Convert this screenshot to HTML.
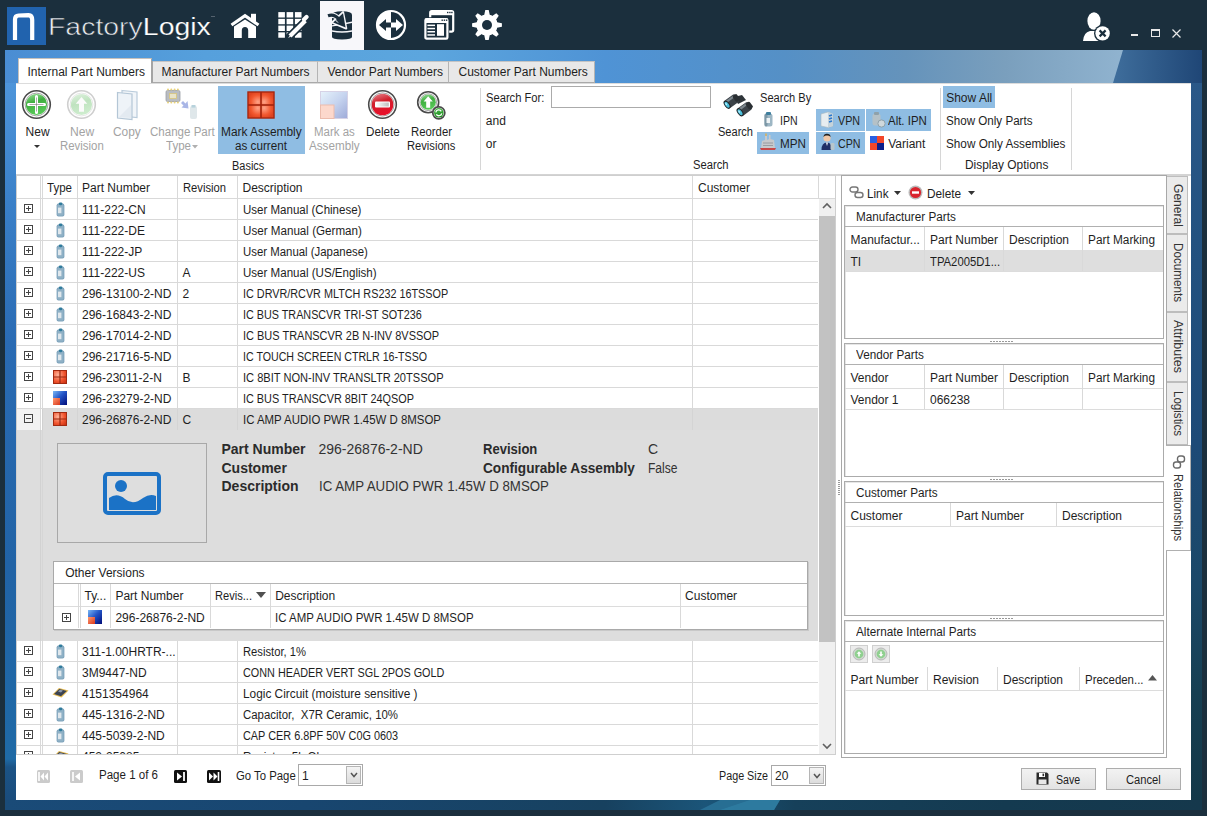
<!DOCTYPE html><html><head><meta charset="utf-8"><style>
html,body{margin:0;padding:0;}
body{width:1207px;height:816px;overflow:hidden;position:relative;background:#1b2f3d;font-family:"Liberation Sans",sans-serif;}
body div,body svg{position:absolute;box-sizing:border-box;}
</style></head><body>

<div style="left:7px;top:7px;width:39px;height:38px;background:#2163ae;"></div>
<svg style="left:7px;top:7px" width="39" height="38" viewBox="0 0 39 38"><path d="M8 33 V12.5 Q8 8.6 11.6 8.5 L21.5 8.1 Q25.2 8.3 25.2 12.8 V33" fill="none" stroke="#fff" stroke-width="4.2"/></svg>
<div style="left:48px;top:12px;font-size:23.5px;line-height:30px;white-space:nowrap;transform:scaleX(1.21);transform-origin:0 0;"><span style="color:#e9ecef;-webkit-text-stroke:0.55px #1b2f3d">Factory</span><span style="color:#ffffff;-webkit-text-stroke:0.2px #1b2f3d">Logix</span></div>
<div style="left:211px;top:16px;width:4px;height:1px;background:#55626e"></div>
<div style="left:320px;top:1px;width:44px;height:49px;background:#f7f7fa;"></div>
<svg style="left:228px;top:11px" width="34" height="30" viewBox="0 0 34 30"><rect x="23" y="2.8" width="5" height="8" fill="#fff"/><path d="M3.5 14 L17 4.8 L30.5 14" fill="none" stroke="#fff" stroke-width="3.2" stroke-linejoin="miter"/><path d="M6 15.5 L17 8.6 L28 15.5 V27 H20.2 V19.5 Q20.2 16 17 16 Q13.8 16 13.8 19.5 V27 H6 Z" fill="#fff"/></svg>
<svg style="left:277px;top:11px" width="32" height="28" viewBox="0 0 32 28"><rect x="1.3" y="1.10" width="6.6" height="5.4" fill="#fff"/><rect x="9.6" y="1.10" width="6.6" height="5.4" fill="#fff"/><rect x="17.9" y="1.10" width="6.6" height="5.4" fill="#fff"/><rect x="1.3" y="7.85" width="6.6" height="5.4" fill="#fff"/><rect x="9.6" y="7.85" width="6.6" height="5.4" fill="#fff"/><rect x="17.9" y="7.85" width="6.6" height="5.4" fill="#fff"/><rect x="1.3" y="14.60" width="6.6" height="5.4" fill="#fff"/><rect x="9.6" y="14.60" width="6.6" height="5.4" fill="#fff"/><rect x="17.9" y="14.60" width="6.6" height="5.4" fill="#fff"/><rect x="1.3" y="21.35" width="6.6" height="5.4" fill="#fff"/><rect x="9.6" y="21.35" width="6.6" height="5.4" fill="#fff"/><rect x="17.9" y="21.35" width="6.6" height="5.4" fill="#fff"/><path d="M12.5 25.5 L28 10" stroke="#1b2f3d" stroke-width="7.5" stroke-linecap="round"/><path d="M13 25 L28.3 9.7" stroke="#fff" stroke-width="4.2" stroke-linecap="butt"/><path d="M27 8.4 L29.5 6" stroke="#fff" stroke-width="4.2" stroke-linecap="round"/><path d="M11 27 L13 24.5 L14 25.5 Z" fill="#fff"/></svg>
<svg style="left:326px;top:9px" width="30" height="33" viewBox="0 0 30 33"><path d="M6 5.8 Q6 2.2 16 2.2 Q26 2.2 26 5.8 V12.6 Q16 14.6 6 16.2 Z" fill="#1b2f3d"/><path d="M6 17.6 Q16 16 26 14 V21.2 Q16 23.2 6 21.2 Z" fill="#1b2f3d"/><path d="M6 22.8 Q16 24.8 26 22.8 V28 Q26 30.4 16 30.4 Q6 30.4 6 28 Z" fill="#1b2f3d"/><path d="M2 6.8 Q8.5 4.6 13 10.6" fill="none" stroke="#f7f7fa" stroke-width="5.2"/><path d="M17 3.2 L20.2 19.4 L6 13.6 Z" fill="#f7f7fa" stroke="#f7f7fa" stroke-width="2.2" stroke-linejoin="round"/><path d="M2 6.8 Q8.5 4.6 13 10.6" fill="none" stroke="#1b2f3d" stroke-width="3.2"/><path d="M17 4.2 L19.6 18.6 L7.2 13.6 Z" fill="#1b2f3d"/><path d="M9.5 11 L12 13.6" stroke="#f7f7fa" stroke-width="1"/></svg>
<svg style="left:375px;top:9px" width="32" height="32" viewBox="0 0 32 32"><circle cx="16" cy="16" r="14" fill="#1b2f3d" stroke="#fff" stroke-width="2.2"/><path d="M16 2 A14 14 0 0 0 16 30 Z" fill="#fff"/><path d="M4 16 L11 10 V13.5 H16 V18.5 H11 V22 Z" fill="#1b2f3d"/><path d="M28 16 L21 10 V13.5 H16 V18.5 H21 V22 Z" fill="#fff"/></svg>
<svg style="left:423px;top:9px" width="32" height="32" viewBox="0 0 32 32"><rect x="7.2" y="2.2" width="23" height="20.5" rx="1.6" fill="none" stroke="#fff" stroke-width="2.2"/><rect x="7" y="2" width="23.4" height="4.2" fill="#fff"/><rect x="24" y="2.8" width="1.4" height="1.4" fill="#1b2f3d"/><rect x="26.2" y="2.8" width="1.4" height="1.4" fill="#1b2f3d"/><rect x="28.2" y="2.8" width="1.4" height="1.4" fill="#1b2f3d"/><rect x="0.6" y="8.2" width="25.6" height="23.4" rx="1.6" fill="#1b2f3d"/><rect x="2.4" y="10" width="22" height="19.6" rx="1.2" fill="none" stroke="#fff" stroke-width="2.2"/><rect x="2" y="9.6" width="22.8" height="4.4" fill="#fff"/><rect x="18.5" y="10.5" width="1.4" height="1.4" fill="#1b2f3d"/><rect x="20.7" y="10.5" width="1.4" height="1.4" fill="#1b2f3d"/><rect x="22.9" y="10.5" width="1.4" height="1.4" fill="#1b2f3d"/><rect x="4.4" y="15.6" width="7.6" height="1.5" fill="#fff"/><rect x="4.4" y="18.8" width="7.6" height="1.5" fill="#fff"/><rect x="4.4" y="22" width="7.6" height="1.5" fill="#fff"/><rect x="4.4" y="25.2" width="7.6" height="1.5" fill="#fff"/><rect x="14" y="15.2" width="7" height="11.6" fill="#fff"/></svg>
<svg style="left:471px;top:9px" width="32" height="32" viewBox="0 0 32 32"><circle cx="16" cy="16" r="10.6" fill="#fff"/><path d="M13.23 5.98 L14.28 1.10 L17.72 1.10 L18.77 5.98 L21.13 6.95 L25.32 4.25 L27.75 6.68 L25.05 10.87 L26.02 13.23 L30.90 14.28 L30.90 17.72 L26.02 18.77 L25.05 21.13 L27.75 25.32 L25.32 27.75 L21.13 25.05 L18.77 26.02 L17.72 30.90 L14.28 30.90 L13.23 26.02 L10.87 25.05 L6.68 27.75 L4.25 25.32 L6.95 21.13 L5.98 18.77 L1.10 17.72 L1.10 14.28 L5.98 13.23 L6.95 10.87 L4.25 6.68 L6.68 4.25 L10.87 6.95 Z" fill="#fff"/><circle cx="16" cy="16" r="5" fill="#1b2f3d"/></svg>
<svg style="left:1080px;top:10px" width="32" height="34" viewBox="0 0 32 34"><ellipse cx="14" cy="11" rx="6.6" ry="8.8" fill="#fff"/><path d="M3 31 Q3.5 22.5 10 21 L18 21 Q24 22 25 27 L25 31 Z" fill="#fff"/><circle cx="22.6" cy="23.4" r="8.6" fill="#1b2f3d"/><circle cx="22.6" cy="23.4" r="7.2" fill="#fff"/><path d="M19.6 20.4 L25.6 26.4 M25.6 20.4 L19.6 26.4" stroke="#1b2f3d" stroke-width="2.2"/></svg>
<div style="left:1131px;top:34px;width:7px;height:2px;background:#e8e8e8;"></div>
<div style="left:1151px;top:29px;width:9px;height:8px;border:1px solid #e8e8e8;border-top:2px solid #e8e8e8;"></div>
<svg style="left:1172px;top:29px" width="9" height="9"><path d="M0.5 0.5L8.5 8.5M8.5 0.5L0.5 8.5" stroke="#e8e8e8" stroke-width="1.2"/></svg>
<div style="left:5px;top:50px;width:1197px;height:33px;background:linear-gradient(90deg,#4a8dd3 0px,#56a0dc 200px,#5ca6de 420px,#4f93d5 600px,#5590c6 780px,#6593bb 900px,#7a9fbd 1000px,#90b3cf 1117px,#90b3cf 1197px);"></div>
<svg style="left:1105px;top:50px" width="97" height="33"><defs><linearGradient id="rg" x1="0" x2="1"><stop offset="0" stop-color="#3f6e9c"/><stop offset="1" stop-color="#1f4676"/></linearGradient></defs><polygon points="18,0 97,0 97,33 8,33" fill="url(#rg)"/></svg>
<div style="left:5px;top:83px;width:11px;height:717px;background:linear-gradient(180deg,#4e95da 0px,#3a80c8 120px,#2a6bb3 260px,#2163a6 480px,#1f69a6 660px,#1f6aa5 676px,#1b5386 684px,#1a4c7c 717px);"></div>
<div style="left:1191px;top:83px;width:11px;height:717px;background:linear-gradient(180deg,#2a5888 0%,#22517f 25%,#1d4a77 50%,#1b4868 70%,#163f52 85%,#133848 100%);"></div>
<div style="left:5px;top:800px;width:1197px;height:10px;background:linear-gradient(90deg,#1a4b78 0px,#184670 300px,#17415f 600px,#1b5579 700px,#16405a 790px,#143a50 1000px,#15384c 1197px);"></div>
<svg style="left:690px;top:800px" width="100" height="10"><polygon points="30,0 90,0 84,10 10,10" fill="#2a7399" opacity="0.85"/><polygon points="60,0 90,0 84,10 30,10" fill="#3283a8" opacity="0.6"/></svg>
<div style="left:16px;top:83px;width:1175px;height:717px;background:#ffffff;"></div>
<div style="left:18px;top:58px;width:134px;height:25px;background:#fff;border-left:1px solid #c6c1bc;border-top:1px solid #c6c1bc;border-right:1px solid #a4a4a4;"></div>
<div style="left:27.5px;top:65.84px;font-size:12px;line-height:12px;color:#1e1e1e;white-space:pre;">Internal Part Numbers</div>
<div style="left:152px;top:61px;width:166px;height:22px;background:#e8e8e8;border-top:1px solid #c4c4c4;border-right:1px solid #b4b4b4;border-bottom:1px solid #a9a9a9;"></div>
<div style="left:161.5px;top:65.84px;font-size:12px;line-height:12px;color:#1e1e1e;white-space:pre;">Manufacturer Part Numbers</div>
<div style="left:318px;top:61px;width:131px;height:22px;background:#e8e8e8;border-top:1px solid #c4c4c4;border-right:1px solid #b4b4b4;border-bottom:1px solid #a9a9a9;"></div>
<div style="left:327.5px;top:65.84px;font-size:12px;line-height:12px;color:#1e1e1e;white-space:pre;">Vendor Part Numbers</div>
<div style="left:449px;top:61px;width:146px;height:22px;background:#e8e8e8;border-top:1px solid #c4c4c4;border-right:1px solid #b4b4b4;border-bottom:1px solid #a9a9a9;"></div>
<div style="left:458.5px;top:65.84px;font-size:12px;line-height:12px;color:#1e1e1e;white-space:pre;">Customer Part Numbers</div>
<div style="left:16px;top:83px;width:1175px;height:1px;background:#dcdcdc;"></div>
<div style="left:152px;top:61px;width:1px;height:22px;background:#a4a4a4;"></div>
<div style="left:218px;top:86px;width:87px;height:68px;background:#8fbde3;"></div>
<div style="left:25.6px;top:125.84px;font-size:12px;line-height:12px;color:#1e1e1e;white-space:pre;">New</div>
<div style="left:70.3px;top:125.84px;font-size:12px;line-height:12px;color:#a3a3a3;transform:scaleX(1.0077);transform-origin:0 0;white-space:pre;">New</div>
<div style="left:60.4px;top:139.84px;font-size:12px;line-height:12px;color:#a3a3a3;transform:scaleX(0.9515);transform-origin:0 0;white-space:pre;">Revision</div>
<div style="left:113px;top:125.84px;font-size:12px;line-height:12px;color:#a3a3a3;transform:scaleX(0.9923);transform-origin:0 0;white-space:pre;">Copy</div>
<div style="left:150px;top:125.84px;font-size:12px;line-height:12px;color:#a3a3a3;transform:scaleX(0.9620);transform-origin:0 0;white-space:pre;">Change Part</div>
<div style="left:166px;top:139.84px;font-size:12px;line-height:12px;color:#a3a3a3;transform:scaleX(0.9610);transform-origin:0 0;white-space:pre;">Type</div>
<div style="left:221px;top:125.84px;font-size:12px;line-height:12px;color:#1e1e1e;transform:scaleX(0.9919);transform-origin:0 0;white-space:pre;">Mark Assembly</div>
<div style="left:235px;top:139.84px;font-size:12px;line-height:12px;color:#1e1e1e;transform:scaleX(0.9748);transform-origin:0 0;white-space:pre;">as current</div>
<div style="left:314px;top:125.84px;font-size:12px;line-height:12px;color:#a3a3a3;transform:scaleX(0.9561);transform-origin:0 0;white-space:pre;">Mark as</div>
<div style="left:309px;top:139.84px;font-size:12px;line-height:12px;color:#a3a3a3;transform:scaleX(0.9728);transform-origin:0 0;white-space:pre;">Assembly</div>
<div style="left:366px;top:125.84px;font-size:12px;line-height:12px;color:#1e1e1e;transform:scaleX(0.9715);transform-origin:0 0;white-space:pre;">Delete</div>
<div style="left:411px;top:125.84px;font-size:12px;line-height:12px;color:#1e1e1e;transform:scaleX(0.9456);transform-origin:0 0;white-space:pre;">Reorder</div>
<div style="left:407px;top:139.84px;font-size:12px;line-height:12px;color:#1e1e1e;transform:scaleX(0.9302);transform-origin:0 0;white-space:pre;">Revisions</div>
<div style="left:232.4px;top:159.84px;font-size:12px;line-height:12px;color:#1e1e1e;transform:scaleX(0.9139);transform-origin:0 0;white-space:pre;">Basics</div>
<div style="left:480px;top:88px;width:1px;height:82px;background:#d6d6d6;"></div>
<div style="left:940px;top:88px;width:1px;height:82px;background:#d6d6d6;"></div>
<div style="left:1071px;top:88px;width:1px;height:82px;background:#d6d6d6;"></div>
<div style="left:485.8px;top:91.84px;font-size:12px;line-height:12px;color:#1e1e1e;transform:scaleX(0.9318);transform-origin:0 0;white-space:pre;">Search For:</div>
<div style="left:551px;top:86px;width:160px;height:22px;background:#fff;border:1px solid #ababab;"></div>
<div style="left:485.8px;top:114.84px;font-size:12px;line-height:12px;color:#1e1e1e;white-space:pre;">and</div>
<div style="left:485.8px;top:137.84px;font-size:12px;line-height:12px;color:#1e1e1e;white-space:pre;">or</div>
<div style="left:718px;top:125.84px;font-size:12px;line-height:12px;color:#1e1e1e;transform:scaleX(0.9207);transform-origin:0 0;white-space:pre;">Search</div>
<div style="left:693px;top:159.34px;font-size:12px;line-height:12px;color:#1e1e1e;transform:scaleX(0.9338);transform-origin:0 0;white-space:pre;">Search</div>
<div style="left:760.2px;top:91.84px;font-size:12px;line-height:12px;color:#1e1e1e;transform:scaleX(0.9251);transform-origin:0 0;white-space:pre;">Search By</div>
<div style="left:816px;top:109px;width:49px;height:22px;background:#8fbde3;"></div>
<div style="left:866px;top:109px;width:65px;height:22px;background:#8fbde3;"></div>
<div style="left:757px;top:132px;width:52px;height:22px;background:#8fbde3;"></div>
<div style="left:816px;top:132px;width:49px;height:22px;background:#8fbde3;"></div>
<div style="left:779.6px;top:114.84px;font-size:12px;line-height:12px;color:#1e1e1e;transform:scaleX(0.8800);transform-origin:0 0;white-space:pre;">IPN</div>
<div style="left:838px;top:114.84px;font-size:12px;line-height:12px;color:#1e1e1e;transform:scaleX(0.8917);transform-origin:0 0;white-space:pre;">VPN</div>
<div style="left:888.2px;top:114.84px;font-size:12px;line-height:12px;color:#1e1e1e;transform:scaleX(0.9543);transform-origin:0 0;white-space:pre;">Alt. IPN</div>
<div style="left:779.6px;top:138.34px;font-size:12px;line-height:12px;color:#1e1e1e;transform:scaleX(0.9748);transform-origin:0 0;white-space:pre;">MPN</div>
<div style="left:838px;top:138.34px;font-size:12px;line-height:12px;color:#1e1e1e;transform:scaleX(0.8878);transform-origin:0 0;white-space:pre;">CPN</div>
<div style="left:888.2px;top:138.34px;font-size:12px;line-height:12px;color:#1e1e1e;white-space:pre;">Variant</div>
<div style="left:943px;top:86px;width:52px;height:22px;background:#8fbde3;"></div>
<div style="left:946.2px;top:92.44px;font-size:12px;line-height:12px;color:#1e1e1e;white-space:pre;">Show All</div>
<div style="left:946.2px;top:115.14px;font-size:12px;line-height:12px;color:#1e1e1e;transform:scaleX(0.9682);transform-origin:0 0;white-space:pre;">Show Only Parts</div>
<div style="left:946.2px;top:138.44px;font-size:12px;line-height:12px;color:#1e1e1e;transform:scaleX(0.9783);transform-origin:0 0;white-space:pre;">Show Only Assemblies</div>
<div style="left:964.8px;top:159.34px;font-size:12px;line-height:12px;color:#1e1e1e;transform:scaleX(0.9925);transform-origin:0 0;white-space:pre;">Display Options</div>
<div style="left:16px;top:174px;width:1175px;height:2px;background:#d4d4d4;"></div>
<div style="left:16px;top:175px;width:820px;height:580px;background:#fff;border:1px solid #cfcfcf;"></div>
<div style="left:47px;top:181.84px;font-size:12px;line-height:12px;color:#1e1e1e;transform:scaleX(0.9610);transform-origin:0 0;white-space:pre;">Type</div>
<div style="left:82px;top:181.84px;font-size:12px;line-height:12px;color:#1e1e1e;white-space:pre;">Part Number</div>
<div style="left:182.5px;top:181.84px;font-size:12px;line-height:12px;color:#1e1e1e;transform:scaleX(0.9341);transform-origin:0 0;white-space:pre;">Revision</div>
<div style="left:242.5px;top:181.84px;font-size:12px;line-height:12px;color:#1e1e1e;white-space:pre;">Description</div>
<div style="left:698px;top:181.84px;font-size:12px;line-height:12px;color:#1e1e1e;white-space:pre;">Customer</div>
<div style="left:40px;top:176px;width:1px;height:22px;background:#d9d9d9;"></div>
<div style="left:42px;top:176px;width:1px;height:22px;background:#d9d9d9;"></div>
<div style="left:77px;top:176px;width:1px;height:22px;background:#d9d9d9;"></div>
<div style="left:177px;top:176px;width:1px;height:22px;background:#d9d9d9;"></div>
<div style="left:237px;top:176px;width:1px;height:22px;background:#d9d9d9;"></div>
<div style="left:692px;top:176px;width:1px;height:22px;background:#d9d9d9;"></div>
<div style="left:818px;top:176px;width:1px;height:22px;background:#d9d9d9;"></div>
<div style="left:17px;top:198px;width:818px;height:1px;background:#d9d9d9;"></div>
<svg style="left:55.5px;top:201.5px" width="9" height="15" viewBox="0 0 9 15"><path d="M0.6 3.4 Q0.6 1.4 2.8 1.2 H6.2 Q8.4 1.4 8.4 3.4 V12.8 Q8.4 14.6 6.6 14.6 H2.4 Q0.6 14.6 0.6 12.8Z" fill="#7fa4bc"/><rect x="1.4" y="2.5" width="6" height="11" rx="1.2" fill="#8fb1c6"/><rect x="2.9" y="0.4" width="3.4" height="2.8" rx="1.1" fill="#2f7b9c"/><rect x="2" y="5.6" width="3.4" height="5.6" fill="#dfe7ec"/></svg>
<svg style="left:24px;top:204px" width="9" height="9" viewBox="0 0 9 9"><rect x="0.5" y="0.5" width="8" height="8" fill="none" stroke="#454545"/><path d="M2 4.5H7" stroke="#454545"/><path d="M4.5 2V7" stroke="#454545"/></svg>
<div style="left:82px;top:204.44px;font-size:12px;line-height:12px;color:#1e1e1e;white-space:pre;">111-222-CN</div>
<div style="left:242.5px;top:204.44px;font-size:12px;line-height:12px;color:#1e1e1e;transform:scaleX(0.9596);transform-origin:0 0;white-space:pre;">User Manual (Chinese)</div>
<div style="left:17px;top:219px;width:801px;height:1px;background:#d9d9d9;"></div>
<svg style="left:55.5px;top:222.5px" width="9" height="15" viewBox="0 0 9 15"><path d="M0.6 3.4 Q0.6 1.4 2.8 1.2 H6.2 Q8.4 1.4 8.4 3.4 V12.8 Q8.4 14.6 6.6 14.6 H2.4 Q0.6 14.6 0.6 12.8Z" fill="#7fa4bc"/><rect x="1.4" y="2.5" width="6" height="11" rx="1.2" fill="#8fb1c6"/><rect x="2.9" y="0.4" width="3.4" height="2.8" rx="1.1" fill="#2f7b9c"/><rect x="2" y="5.6" width="3.4" height="5.6" fill="#dfe7ec"/></svg>
<svg style="left:24px;top:225px" width="9" height="9" viewBox="0 0 9 9"><rect x="0.5" y="0.5" width="8" height="8" fill="none" stroke="#454545"/><path d="M2 4.5H7" stroke="#454545"/><path d="M4.5 2V7" stroke="#454545"/></svg>
<div style="left:82px;top:225.44px;font-size:12px;line-height:12px;color:#1e1e1e;white-space:pre;">111-222-DE</div>
<div style="left:242.5px;top:225.44px;font-size:12px;line-height:12px;color:#1e1e1e;transform:scaleX(0.9690);transform-origin:0 0;white-space:pre;">User Manual (German)</div>
<div style="left:17px;top:240px;width:801px;height:1px;background:#d9d9d9;"></div>
<svg style="left:55.5px;top:243.5px" width="9" height="15" viewBox="0 0 9 15"><path d="M0.6 3.4 Q0.6 1.4 2.8 1.2 H6.2 Q8.4 1.4 8.4 3.4 V12.8 Q8.4 14.6 6.6 14.6 H2.4 Q0.6 14.6 0.6 12.8Z" fill="#7fa4bc"/><rect x="1.4" y="2.5" width="6" height="11" rx="1.2" fill="#8fb1c6"/><rect x="2.9" y="0.4" width="3.4" height="2.8" rx="1.1" fill="#2f7b9c"/><rect x="2" y="5.6" width="3.4" height="5.6" fill="#dfe7ec"/></svg>
<svg style="left:24px;top:246px" width="9" height="9" viewBox="0 0 9 9"><rect x="0.5" y="0.5" width="8" height="8" fill="none" stroke="#454545"/><path d="M2 4.5H7" stroke="#454545"/><path d="M4.5 2V7" stroke="#454545"/></svg>
<div style="left:82px;top:246.44px;font-size:12px;line-height:12px;color:#1e1e1e;white-space:pre;">111-222-JP</div>
<div style="left:242.5px;top:246.44px;font-size:12px;line-height:12px;color:#1e1e1e;transform:scaleX(0.9498);transform-origin:0 0;white-space:pre;">User Manual (Japanese)</div>
<div style="left:17px;top:261px;width:801px;height:1px;background:#d9d9d9;"></div>
<svg style="left:55.5px;top:264.5px" width="9" height="15" viewBox="0 0 9 15"><path d="M0.6 3.4 Q0.6 1.4 2.8 1.2 H6.2 Q8.4 1.4 8.4 3.4 V12.8 Q8.4 14.6 6.6 14.6 H2.4 Q0.6 14.6 0.6 12.8Z" fill="#7fa4bc"/><rect x="1.4" y="2.5" width="6" height="11" rx="1.2" fill="#8fb1c6"/><rect x="2.9" y="0.4" width="3.4" height="2.8" rx="1.1" fill="#2f7b9c"/><rect x="2" y="5.6" width="3.4" height="5.6" fill="#dfe7ec"/></svg>
<svg style="left:24px;top:267px" width="9" height="9" viewBox="0 0 9 9"><rect x="0.5" y="0.5" width="8" height="8" fill="none" stroke="#454545"/><path d="M2 4.5H7" stroke="#454545"/><path d="M4.5 2V7" stroke="#454545"/></svg>
<div style="left:82px;top:267.44px;font-size:12px;line-height:12px;color:#1e1e1e;white-space:pre;">111-222-US</div>
<div style="left:182.5px;top:267.44px;font-size:12px;line-height:12px;color:#1e1e1e;white-space:pre;">A</div>
<div style="left:242.5px;top:267.44px;font-size:12px;line-height:12px;color:#1e1e1e;transform:scaleX(0.9631);transform-origin:0 0;white-space:pre;">User Manual (US/English)</div>
<div style="left:17px;top:282px;width:801px;height:1px;background:#d9d9d9;"></div>
<svg style="left:55.5px;top:285.5px" width="9" height="15" viewBox="0 0 9 15"><path d="M0.6 3.4 Q0.6 1.4 2.8 1.2 H6.2 Q8.4 1.4 8.4 3.4 V12.8 Q8.4 14.6 6.6 14.6 H2.4 Q0.6 14.6 0.6 12.8Z" fill="#7fa4bc"/><rect x="1.4" y="2.5" width="6" height="11" rx="1.2" fill="#8fb1c6"/><rect x="2.9" y="0.4" width="3.4" height="2.8" rx="1.1" fill="#2f7b9c"/><rect x="2" y="5.6" width="3.4" height="5.6" fill="#dfe7ec"/></svg>
<svg style="left:24px;top:288px" width="9" height="9" viewBox="0 0 9 9"><rect x="0.5" y="0.5" width="8" height="8" fill="none" stroke="#454545"/><path d="M2 4.5H7" stroke="#454545"/><path d="M4.5 2V7" stroke="#454545"/></svg>
<div style="left:82px;top:288.44px;font-size:12px;line-height:12px;color:#1e1e1e;white-space:pre;">296-13100-2-ND</div>
<div style="left:182.5px;top:288.44px;font-size:12px;line-height:12px;color:#1e1e1e;white-space:pre;">2</div>
<div style="left:242.5px;top:288.44px;font-size:12px;line-height:12px;color:#1e1e1e;transform:scaleX(0.9012);transform-origin:0 0;white-space:pre;">IC DRVR/RCVR MLTCH RS232 16TSSOP</div>
<div style="left:17px;top:303px;width:801px;height:1px;background:#d9d9d9;"></div>
<svg style="left:55.5px;top:306.5px" width="9" height="15" viewBox="0 0 9 15"><path d="M0.6 3.4 Q0.6 1.4 2.8 1.2 H6.2 Q8.4 1.4 8.4 3.4 V12.8 Q8.4 14.6 6.6 14.6 H2.4 Q0.6 14.6 0.6 12.8Z" fill="#7fa4bc"/><rect x="1.4" y="2.5" width="6" height="11" rx="1.2" fill="#8fb1c6"/><rect x="2.9" y="0.4" width="3.4" height="2.8" rx="1.1" fill="#2f7b9c"/><rect x="2" y="5.6" width="3.4" height="5.6" fill="#dfe7ec"/></svg>
<svg style="left:24px;top:309px" width="9" height="9" viewBox="0 0 9 9"><rect x="0.5" y="0.5" width="8" height="8" fill="none" stroke="#454545"/><path d="M2 4.5H7" stroke="#454545"/><path d="M4.5 2V7" stroke="#454545"/></svg>
<div style="left:82px;top:309.44px;font-size:12px;line-height:12px;color:#1e1e1e;white-space:pre;">296-16843-2-ND</div>
<div style="left:242.5px;top:309.44px;font-size:12px;line-height:12px;color:#1e1e1e;transform:scaleX(0.8990);transform-origin:0 0;white-space:pre;">IC BUS TRANSCVR TRI-ST SOT236</div>
<div style="left:17px;top:324px;width:801px;height:1px;background:#d9d9d9;"></div>
<svg style="left:55.5px;top:327.5px" width="9" height="15" viewBox="0 0 9 15"><path d="M0.6 3.4 Q0.6 1.4 2.8 1.2 H6.2 Q8.4 1.4 8.4 3.4 V12.8 Q8.4 14.6 6.6 14.6 H2.4 Q0.6 14.6 0.6 12.8Z" fill="#7fa4bc"/><rect x="1.4" y="2.5" width="6" height="11" rx="1.2" fill="#8fb1c6"/><rect x="2.9" y="0.4" width="3.4" height="2.8" rx="1.1" fill="#2f7b9c"/><rect x="2" y="5.6" width="3.4" height="5.6" fill="#dfe7ec"/></svg>
<svg style="left:24px;top:330px" width="9" height="9" viewBox="0 0 9 9"><rect x="0.5" y="0.5" width="8" height="8" fill="none" stroke="#454545"/><path d="M2 4.5H7" stroke="#454545"/><path d="M4.5 2V7" stroke="#454545"/></svg>
<div style="left:82px;top:330.44px;font-size:12px;line-height:12px;color:#1e1e1e;white-space:pre;">296-17014-2-ND</div>
<div style="left:242.5px;top:330.44px;font-size:12px;line-height:12px;color:#1e1e1e;transform:scaleX(0.9144);transform-origin:0 0;white-space:pre;">IC BUS TRANSCVR 2B N-INV 8VSSOP</div>
<div style="left:17px;top:345px;width:801px;height:1px;background:#d9d9d9;"></div>
<svg style="left:55.5px;top:348.5px" width="9" height="15" viewBox="0 0 9 15"><path d="M0.6 3.4 Q0.6 1.4 2.8 1.2 H6.2 Q8.4 1.4 8.4 3.4 V12.8 Q8.4 14.6 6.6 14.6 H2.4 Q0.6 14.6 0.6 12.8Z" fill="#7fa4bc"/><rect x="1.4" y="2.5" width="6" height="11" rx="1.2" fill="#8fb1c6"/><rect x="2.9" y="0.4" width="3.4" height="2.8" rx="1.1" fill="#2f7b9c"/><rect x="2" y="5.6" width="3.4" height="5.6" fill="#dfe7ec"/></svg>
<svg style="left:24px;top:351px" width="9" height="9" viewBox="0 0 9 9"><rect x="0.5" y="0.5" width="8" height="8" fill="none" stroke="#454545"/><path d="M2 4.5H7" stroke="#454545"/><path d="M4.5 2V7" stroke="#454545"/></svg>
<div style="left:82px;top:351.44px;font-size:12px;line-height:12px;color:#1e1e1e;white-space:pre;">296-21716-5-ND</div>
<div style="left:242.5px;top:351.44px;font-size:12px;line-height:12px;color:#1e1e1e;transform:scaleX(0.8864);transform-origin:0 0;white-space:pre;">IC TOUCH SCREEN CTRLR 16-TSSO</div>
<div style="left:17px;top:366px;width:801px;height:1px;background:#d9d9d9;"></div>
<svg style="left:53px;top:370px" width="14" height="14" viewBox="0 0 14 14"><defs><radialGradient id="ag53370" cx="0.35" cy="0.35" r="0.8"><stop offset="0" stop-color="#ffb49a"/><stop offset="0.6" stop-color="#f0532c"/><stop offset="1" stop-color="#c83012"/></radialGradient></defs><rect x="0" y="0" width="14" height="14" fill="url(#ag53370)"/><rect x="0.5" y="0.5" width="13" height="13" fill="none" stroke="#a32a10" stroke-width="1"/><path d="M7 0V14M0 7H14" stroke="#9b2a12" stroke-width="1.2"/></svg>
<svg style="left:24px;top:372px" width="9" height="9" viewBox="0 0 9 9"><rect x="0.5" y="0.5" width="8" height="8" fill="none" stroke="#454545"/><path d="M2 4.5H7" stroke="#454545"/><path d="M4.5 2V7" stroke="#454545"/></svg>
<div style="left:82px;top:372.44px;font-size:12px;line-height:12px;color:#1e1e1e;white-space:pre;">296-23011-2-N</div>
<div style="left:182.5px;top:372.44px;font-size:12px;line-height:12px;color:#1e1e1e;white-space:pre;">B</div>
<div style="left:242.5px;top:372.44px;font-size:12px;line-height:12px;color:#1e1e1e;transform:scaleX(0.9226);transform-origin:0 0;white-space:pre;">IC 8BIT NON-INV TRANSLTR 20TSSOP</div>
<div style="left:17px;top:387px;width:801px;height:1px;background:#d9d9d9;"></div>
<svg style="left:53px;top:391px" width="14" height="14" viewBox="0 0 14 14"><defs><linearGradient id="vg53391" x1="0" y1="0" x2="1" y2="1"><stop offset="0" stop-color="#7ab8f5"/><stop offset="0.45" stop-color="#2456c8"/><stop offset="1" stop-color="#000c78"/></linearGradient><linearGradient id="vr53391" x1="0" y1="0" x2="1" y2="1"><stop offset="0" stop-color="#ff9a70"/><stop offset="1" stop-color="#d8361a"/></linearGradient></defs><rect width="14" height="14" fill="url(#vg53391)"/><rect x="0" y="7" width="7" height="7" fill="url(#vr53391)"/></svg>
<svg style="left:24px;top:393px" width="9" height="9" viewBox="0 0 9 9"><rect x="0.5" y="0.5" width="8" height="8" fill="none" stroke="#454545"/><path d="M2 4.5H7" stroke="#454545"/><path d="M4.5 2V7" stroke="#454545"/></svg>
<div style="left:82px;top:393.44px;font-size:12px;line-height:12px;color:#1e1e1e;white-space:pre;">296-23279-2-ND</div>
<div style="left:242.5px;top:393.44px;font-size:12px;line-height:12px;color:#1e1e1e;transform:scaleX(0.9048);transform-origin:0 0;white-space:pre;">IC BUS TRANSCVR 8BIT 24QSOP</div>
<div style="left:17px;top:408px;width:801px;height:1px;background:#d9d9d9;"></div>
<div style="left:40px;top:199px;width:1px;height:210px;background:#d9d9d9;"></div>
<div style="left:42px;top:199px;width:1px;height:210px;background:#d9d9d9;"></div>
<div style="left:77px;top:199px;width:1px;height:210px;background:#d9d9d9;"></div>
<div style="left:177px;top:199px;width:1px;height:210px;background:#d9d9d9;"></div>
<div style="left:237px;top:199px;width:1px;height:210px;background:#d9d9d9;"></div>
<div style="left:692px;top:199px;width:1px;height:210px;background:#d9d9d9;"></div>
<div style="left:42px;top:409px;width:776px;height:21px;background:#dcdcdc;"></div>
<div style="left:17px;top:409px;width:23px;height:21px;background:#f2f2f2;"></div>
<div style="left:40px;top:409px;width:1px;height:21px;background:#d9d9d9;"></div>
<div style="left:42px;top:409px;width:1px;height:21px;background:#d0d0d0;"></div>
<div style="left:77px;top:409px;width:1px;height:21px;background:#d4d4d4;"></div>
<div style="left:177px;top:409px;width:1px;height:21px;background:#d4d4d4;"></div>
<div style="left:237px;top:409px;width:1px;height:21px;background:#d4d4d4;"></div>
<div style="left:692px;top:409px;width:1px;height:21px;background:#d4d4d4;"></div>
<svg style="left:53px;top:412px" width="14" height="14" viewBox="0 0 14 14"><defs><radialGradient id="ag53412" cx="0.35" cy="0.35" r="0.8"><stop offset="0" stop-color="#ffb49a"/><stop offset="0.6" stop-color="#f0532c"/><stop offset="1" stop-color="#c83012"/></radialGradient></defs><rect x="0" y="0" width="14" height="14" fill="url(#ag53412)"/><rect x="0.5" y="0.5" width="13" height="13" fill="none" stroke="#a32a10" stroke-width="1"/><path d="M7 0V14M0 7H14" stroke="#9b2a12" stroke-width="1.2"/></svg>
<svg style="left:24px;top:414px" width="9" height="9" viewBox="0 0 9 9"><rect x="0.5" y="0.5" width="8" height="8" fill="none" stroke="#454545"/><path d="M2 4.5H7" stroke="#454545"/></svg>
<div style="left:82px;top:414.44px;font-size:12px;line-height:12px;color:#1e1e1e;white-space:pre;">296-26876-2-ND</div>
<div style="left:182.5px;top:414.44px;font-size:12px;line-height:12px;color:#1e1e1e;white-space:pre;">C</div>
<div style="left:242.5px;top:414.44px;font-size:12px;line-height:12px;color:#1e1e1e;transform:scaleX(0.9524);transform-origin:0 0;white-space:pre;">IC AMP AUDIO PWR 1.45W D 8MSOP</div>
<div style="left:17px;top:430px;width:801px;height:211px;background:#dddddd;"></div>
<div style="left:40px;top:430px;width:1px;height:211px;background:#d2d2d2;"></div>
<div style="left:42px;top:430px;width:1px;height:211px;background:#d6d6d6;"></div>
<div style="left:57px;top:443px;width:150px;height:100px;background:#dedede;border:1px solid #a8a8a8;"></div>
<svg style="left:103px;top:472px" width="58" height="43" viewBox="0 0 58 43"><rect x="2" y="2" width="54" height="39" rx="3" fill="none" stroke="#1b72c6" stroke-width="4"/><circle cx="18" cy="14" r="6" fill="#1b72c6"/><path d="M6 26 Q14 20 22 27 Q30 34 40 26 Q47 21 53 24 V38 H6 Z" fill="#1b72c6"/></svg>
<div style="left:221.5px;top:442.15px;font-size:14px;line-height:14px;color:#2b2b2b;font-weight:bold;white-space:pre;">Part Number</div>
<div style="left:221.5px;top:460.65px;font-size:14px;line-height:14px;color:#2b2b2b;font-weight:bold;white-space:pre;">Customer</div>
<div style="left:221.5px;top:479.15px;font-size:14px;line-height:14px;color:#2b2b2b;font-weight:bold;white-space:pre;">Description</div>
<div style="left:318.5px;top:442.15px;font-size:14px;line-height:14px;color:#333;white-space:pre;">296-26876-2-ND</div>
<div style="left:318.5px;top:479.15px;font-size:14px;line-height:14px;color:#333;transform:scaleX(0.9485);transform-origin:0 0;white-space:pre;">IC AMP AUDIO PWR 1.45W D 8MSOP</div>
<div style="left:483.3px;top:442.15px;font-size:14px;line-height:14px;color:#2b2b2b;font-weight:bold;transform:scaleX(0.9309);transform-origin:0 0;white-space:pre;">Revision</div>
<div style="left:483.3px;top:460.65px;font-size:14px;line-height:14px;color:#2b2b2b;font-weight:bold;transform:scaleX(0.9737);transform-origin:0 0;white-space:pre;">Configurable Assembly</div>
<div style="left:648px;top:442.15px;font-size:14px;line-height:14px;color:#333;white-space:pre;">C</div>
<div style="left:648px;top:460.65px;font-size:14px;line-height:14px;color:#333;transform:scaleX(0.8621);transform-origin:0 0;white-space:pre;">False</div>
<div style="left:53px;top:561px;width:755px;height:69px;background:#fff;border:1px solid #a9a9a9;box-shadow:1px 1px 0 #c8c8c8;"></div>
<div style="left:65.2px;top:567.34px;font-size:12px;line-height:12px;color:#1e1e1e;white-space:pre;">Other Versions</div>
<div style="left:54px;top:583px;width:753px;height:1px;background:#b5b5b5;"></div>
<div style="left:54px;top:606px;width:753px;height:1px;background:#dcdcdc;"></div>
<div style="left:78px;top:584px;width:1px;height:44px;background:#d9d9d9;"></div>
<div style="left:80px;top:584px;width:1px;height:44px;background:#d9d9d9;"></div>
<div style="left:110px;top:584px;width:1px;height:44px;background:#d9d9d9;"></div>
<div style="left:210px;top:584px;width:1px;height:44px;background:#d9d9d9;"></div>
<div style="left:270px;top:584px;width:1px;height:44px;background:#d9d9d9;"></div>
<div style="left:680px;top:584px;width:1px;height:44px;background:#d9d9d9;"></div>
<div style="left:84.5px;top:590.34px;font-size:12px;line-height:12px;color:#1e1e1e;white-space:pre;">Ty...</div>
<div style="left:115.4px;top:590.34px;font-size:12px;line-height:12px;color:#1e1e1e;white-space:pre;">Part Number</div>
<div style="left:215.2px;top:590.34px;font-size:12px;line-height:12px;color:#1e1e1e;transform:scaleX(0.9250);transform-origin:0 0;white-space:pre;">Revis...</div>
<svg style="left:256px;top:592px" width="10" height="6"><path d="M0 0H10L5 6Z" fill="#505050"/></svg>
<div style="left:275.2px;top:590.34px;font-size:12px;line-height:12px;color:#1e1e1e;white-space:pre;">Description</div>
<div style="left:685.1px;top:590.34px;font-size:12px;line-height:12px;color:#1e1e1e;white-space:pre;">Customer</div>
<svg style="left:62px;top:613px" width="9" height="9" viewBox="0 0 9 9"><rect x="0.5" y="0.5" width="8" height="8" fill="none" stroke="#454545"/><path d="M2 4.5H7" stroke="#454545"/><path d="M4.5 2V7" stroke="#454545"/></svg>
<svg style="left:88px;top:610px" width="14" height="14" viewBox="0 0 14 14"><defs><linearGradient id="vg88610" x1="0" y1="0" x2="1" y2="1"><stop offset="0" stop-color="#7ab8f5"/><stop offset="0.45" stop-color="#2456c8"/><stop offset="1" stop-color="#000c78"/></linearGradient><linearGradient id="vr88610" x1="0" y1="0" x2="1" y2="1"><stop offset="0" stop-color="#ff9a70"/><stop offset="1" stop-color="#d8361a"/></linearGradient></defs><rect width="14" height="14" fill="url(#vg88610)"/><rect x="0" y="7" width="7" height="7" fill="url(#vr88610)"/></svg>
<div style="left:115.4px;top:612.34px;font-size:12px;line-height:12px;color:#1e1e1e;white-space:pre;">296-26876-2-ND</div>
<div style="left:275.2px;top:612.34px;font-size:12px;line-height:12px;color:#1e1e1e;transform:scaleX(0.9553);transform-origin:0 0;white-space:pre;">IC AMP AUDIO PWR 1.45W D 8MSOP</div>
<svg style="left:55.5px;top:643.5px" width="9" height="15" viewBox="0 0 9 15"><path d="M0.6 3.4 Q0.6 1.4 2.8 1.2 H6.2 Q8.4 1.4 8.4 3.4 V12.8 Q8.4 14.6 6.6 14.6 H2.4 Q0.6 14.6 0.6 12.8Z" fill="#7fa4bc"/><rect x="1.4" y="2.5" width="6" height="11" rx="1.2" fill="#8fb1c6"/><rect x="2.9" y="0.4" width="3.4" height="2.8" rx="1.1" fill="#2f7b9c"/><rect x="2" y="5.6" width="3.4" height="5.6" fill="#dfe7ec"/></svg>
<svg style="left:24px;top:646px" width="9" height="9" viewBox="0 0 9 9"><rect x="0.5" y="0.5" width="8" height="8" fill="none" stroke="#454545"/><path d="M2 4.5H7" stroke="#454545"/><path d="M4.5 2V7" stroke="#454545"/></svg>
<div style="left:82px;top:646.44px;font-size:12px;line-height:12px;color:#1e1e1e;white-space:pre;">311-1.00HRTR-...</div>
<div style="left:242.5px;top:646.44px;font-size:12px;line-height:12px;color:#1e1e1e;transform:scaleX(0.9353);transform-origin:0 0;white-space:pre;">Resistor, 1%</div>
<div style="left:17px;top:661px;width:801px;height:1px;background:#d9d9d9;"></div>
<svg style="left:55.5px;top:664.5px" width="9" height="15" viewBox="0 0 9 15"><path d="M0.6 3.4 Q0.6 1.4 2.8 1.2 H6.2 Q8.4 1.4 8.4 3.4 V12.8 Q8.4 14.6 6.6 14.6 H2.4 Q0.6 14.6 0.6 12.8Z" fill="#7fa4bc"/><rect x="1.4" y="2.5" width="6" height="11" rx="1.2" fill="#8fb1c6"/><rect x="2.9" y="0.4" width="3.4" height="2.8" rx="1.1" fill="#2f7b9c"/><rect x="2" y="5.6" width="3.4" height="5.6" fill="#dfe7ec"/></svg>
<svg style="left:24px;top:667px" width="9" height="9" viewBox="0 0 9 9"><rect x="0.5" y="0.5" width="8" height="8" fill="none" stroke="#454545"/><path d="M2 4.5H7" stroke="#454545"/><path d="M4.5 2V7" stroke="#454545"/></svg>
<div style="left:82px;top:667.44px;font-size:12px;line-height:12px;color:#1e1e1e;white-space:pre;">3M9447-ND</div>
<div style="left:242.5px;top:667.44px;font-size:12px;line-height:12px;color:#1e1e1e;transform:scaleX(0.9022);transform-origin:0 0;white-space:pre;">CONN HEADER VERT SGL 2POS GOLD</div>
<div style="left:17px;top:682px;width:801px;height:1px;background:#d9d9d9;"></div>
<svg style="left:52px;top:687px" width="17" height="11" viewBox="0 0 17 11"><path d="M0.5 7.5 L7 1 L16.5 3.5 L9.5 10.5 Z" fill="#e3b84e"/><path d="M2 7 L7.3 2 L14.8 4 L9 9.2 Z" fill="#3b4352"/><path d="M6 4.5 L8 2.8 L11 3.6 L9 5.4Z" fill="#8c97a8"/></svg>
<svg style="left:24px;top:688px" width="9" height="9" viewBox="0 0 9 9"><rect x="0.5" y="0.5" width="8" height="8" fill="none" stroke="#454545"/><path d="M2 4.5H7" stroke="#454545"/><path d="M4.5 2V7" stroke="#454545"/></svg>
<div style="left:82px;top:688.44px;font-size:12px;line-height:12px;color:#1e1e1e;white-space:pre;">4151354964</div>
<div style="left:242.5px;top:688.44px;font-size:12px;line-height:12px;color:#1e1e1e;transform:scaleX(0.9874);transform-origin:0 0;white-space:pre;">Logic Circuit (moisture sensitive )</div>
<div style="left:17px;top:703px;width:801px;height:1px;background:#d9d9d9;"></div>
<svg style="left:55.5px;top:706.5px" width="9" height="15" viewBox="0 0 9 15"><path d="M0.6 3.4 Q0.6 1.4 2.8 1.2 H6.2 Q8.4 1.4 8.4 3.4 V12.8 Q8.4 14.6 6.6 14.6 H2.4 Q0.6 14.6 0.6 12.8Z" fill="#7fa4bc"/><rect x="1.4" y="2.5" width="6" height="11" rx="1.2" fill="#8fb1c6"/><rect x="2.9" y="0.4" width="3.4" height="2.8" rx="1.1" fill="#2f7b9c"/><rect x="2" y="5.6" width="3.4" height="5.6" fill="#dfe7ec"/></svg>
<svg style="left:24px;top:709px" width="9" height="9" viewBox="0 0 9 9"><rect x="0.5" y="0.5" width="8" height="8" fill="none" stroke="#454545"/><path d="M2 4.5H7" stroke="#454545"/><path d="M4.5 2V7" stroke="#454545"/></svg>
<div style="left:82px;top:709.44px;font-size:12px;line-height:12px;color:#1e1e1e;white-space:pre;">445-1316-2-ND</div>
<div style="left:242.5px;top:709.44px;font-size:12px;line-height:12px;color:#1e1e1e;transform:scaleX(0.9526);transform-origin:0 0;white-space:pre;">Capacitor,  X7R Ceramic, 10%</div>
<div style="left:17px;top:724px;width:801px;height:1px;background:#d9d9d9;"></div>
<svg style="left:55.5px;top:727.5px" width="9" height="15" viewBox="0 0 9 15"><path d="M0.6 3.4 Q0.6 1.4 2.8 1.2 H6.2 Q8.4 1.4 8.4 3.4 V12.8 Q8.4 14.6 6.6 14.6 H2.4 Q0.6 14.6 0.6 12.8Z" fill="#7fa4bc"/><rect x="1.4" y="2.5" width="6" height="11" rx="1.2" fill="#8fb1c6"/><rect x="2.9" y="0.4" width="3.4" height="2.8" rx="1.1" fill="#2f7b9c"/><rect x="2" y="5.6" width="3.4" height="5.6" fill="#dfe7ec"/></svg>
<svg style="left:24px;top:730px" width="9" height="9" viewBox="0 0 9 9"><rect x="0.5" y="0.5" width="8" height="8" fill="none" stroke="#454545"/><path d="M2 4.5H7" stroke="#454545"/><path d="M4.5 2V7" stroke="#454545"/></svg>
<div style="left:82px;top:730.44px;font-size:12px;line-height:12px;color:#1e1e1e;white-space:pre;">445-5039-2-ND</div>
<div style="left:242.5px;top:730.44px;font-size:12px;line-height:12px;color:#1e1e1e;transform:scaleX(0.9063);transform-origin:0 0;white-space:pre;">CAP CER 6.8PF 50V C0G 0603</div>
<div style="left:17px;top:745px;width:801px;height:1px;background:#d9d9d9;"></div>
<svg style="left:52px;top:750px" width="17" height="11" viewBox="0 0 17 11"><path d="M0.5 7.5 L7 1 L16.5 3.5 L9.5 10.5 Z" fill="#e3b84e"/><path d="M2 7 L7.3 2 L14.8 4 L9 9.2 Z" fill="#3b4352"/><path d="M6 4.5 L8 2.8 L11 3.6 L9 5.4Z" fill="#8c97a8"/></svg>
<svg style="left:24px;top:751px" width="9" height="9" viewBox="0 0 9 9"><rect x="0.5" y="0.5" width="8" height="8" fill="none" stroke="#454545"/><path d="M2 4.5H7" stroke="#454545"/><path d="M4.5 2V7" stroke="#454545"/></svg>
<div style="left:82px;top:751.44px;font-size:12px;line-height:12px;color:#1e1e1e;white-space:pre;">452-25085</div>
<div style="left:242.5px;top:751.44px;font-size:12px;line-height:12px;color:#1e1e1e;transform:scaleX(0.9764);transform-origin:0 0;white-space:pre;">Resistor, 5k Ohm</div>
<div style="left:40px;top:641px;width:1px;height:113px;background:#d9d9d9;"></div>
<div style="left:42px;top:641px;width:1px;height:113px;background:#d9d9d9;"></div>
<div style="left:77px;top:641px;width:1px;height:113px;background:#d9d9d9;"></div>
<div style="left:177px;top:641px;width:1px;height:113px;background:#d9d9d9;"></div>
<div style="left:237px;top:641px;width:1px;height:113px;background:#d9d9d9;"></div>
<div style="left:692px;top:641px;width:1px;height:113px;background:#d9d9d9;"></div>
<div style="left:17px;top:754px;width:818px;height:46px;background:#fff;"></div>
<div style="left:16px;top:754px;width:820px;height:1px;background:#cfcfcf;"></div>
<div style="left:819px;top:199px;width:16px;height:555px;background:#f0f0f0;"></div>
<div style="left:819px;top:216px;width:16px;height:426px;background:#c2c2c2;"></div>
<svg style="left:822px;top:202px" width="10" height="8"><path d="M1 6L5 2L9 6" fill="none" stroke="#606060" stroke-width="1.6"/></svg>
<svg style="left:822px;top:742px" width="10" height="8"><path d="M1 2L5 6L9 2" fill="none" stroke="#606060" stroke-width="1.6"/></svg>
<svg style="left:37px;top:770px" width="13" height="13" viewBox="0 0 13 13"><rect width="13" height="13" rx="1.5" fill="#cbcbcb"/><path d="M2 2V11" stroke="#fff" stroke-width="1.6"/><path d="M7 2.5L3.5 6.5L7 10.5ZM11 2.5L7.5 6.5L11 10.5Z" fill="#fff"/></svg>
<svg style="left:70px;top:770px" width="13" height="13" viewBox="0 0 13 13"><rect width="13" height="13" rx="1.5" fill="#cbcbcb"/><path d="M3 2V11" stroke="#fff" stroke-width="1.6"/><path d="M10 2.5L5 6.5L10 10.5Z" fill="#fff"/></svg>
<div style="left:99.2px;top:769.34px;font-size:12px;line-height:12px;color:#1e1e1e;transform:scaleX(0.9618);transform-origin:0 0;white-space:pre;">Page 1 of 6</div>
<svg style="left:174px;top:770px" width="13" height="13" viewBox="0 0 13 13"><rect width="13" height="13" rx="1.5" fill="#111"/><path d="M10 2V11" stroke="#fff" stroke-width="1.8"/><path d="M3 2.5L8 6.5L3 10.5Z" fill="#fff"/></svg>
<svg style="left:207px;top:770px" width="14" height="13" viewBox="0 0 14 13"><rect width="14" height="13" rx="1.5" fill="#111"/><path d="M11.5 2V11" stroke="#fff" stroke-width="1.6"/><path d="M2 2.5L6 6.5L2 10.5ZM6.5 2.5L10.5 6.5L6.5 10.5Z" fill="#fff"/></svg>
<div style="left:235.5px;top:769.84px;font-size:12px;line-height:12px;color:#1e1e1e;transform:scaleX(0.9457);transform-origin:0 0;white-space:pre;">Go To Page</div>
<div style="left:298px;top:764px;width:65px;height:22px;background:#fff;border:1px solid #a9a9a9;"></div>
<div style="left:346px;top:766px;width:15px;height:18px;background:linear-gradient(#f4f4f4,#dcdcdc);border:1px solid #b5b5b5;"></div>
<svg style="left:349.5px;top:772.0px" width="8" height="6"><path d="M1 1L4 4.5L7 1" fill="none" stroke="#555" stroke-width="1.5"/></svg>
<div style="left:302px;top:769.84px;font-size:12px;line-height:12px;color:#1e1e1e;white-space:pre;">1</div>
<div style="left:718.5px;top:769.84px;font-size:12px;line-height:12px;color:#1e1e1e;transform:scaleX(0.8960);transform-origin:0 0;white-space:pre;">Page Size</div>
<div style="left:771px;top:765px;width:55px;height:21px;background:#fff;border:1px solid #a9a9a9;"></div>
<div style="left:809px;top:767px;width:15px;height:17px;background:linear-gradient(#f4f4f4,#dcdcdc);border:1px solid #b5b5b5;"></div>
<svg style="left:812.5px;top:772.5px" width="8" height="6"><path d="M1 1L4 4.5L7 1" fill="none" stroke="#555" stroke-width="1.5"/></svg>
<div style="left:775px;top:769.84px;font-size:12px;line-height:12px;color:#1e1e1e;white-space:pre;">20</div>
<div style="left:1021px;top:768px;width:75px;height:22px;background:linear-gradient(#f2f2f2,#e3e3e3);border:1px solid #adadad;"></div>
<div style="left:1106px;top:768px;width:75px;height:22px;background:linear-gradient(#f2f2f2,#e3e3e3);border:1px solid #adadad;"></div>
<svg style="left:1036px;top:772px" width="13" height="13" viewBox="0 0 13 13"><path d="M0.5 0.5H11L12.5 2V12.5H0.5Z" fill="#2a2a2a"/><rect x="3" y="1" width="6" height="4" fill="#fff"/><rect x="6.5" y="1.6" width="1.6" height="2.6" fill="#2a2a2a"/><rect x="2.5" y="7.5" width="8" height="4.5" fill="#e8e8e8"/></svg>
<div style="left:1055.5px;top:773.84px;font-size:12px;line-height:12px;color:#1e1e1e;transform:scaleX(0.8850);transform-origin:0 0;white-space:pre;">Save</div>
<div style="left:1126px;top:773.84px;font-size:12px;line-height:12px;color:#1e1e1e;transform:scaleX(0.9315);transform-origin:0 0;white-space:pre;">Cancel</div>
<div style="left:841px;top:175px;width:326px;height:583px;background:#fff;border:1px solid #a8a8a8;"></div>
<div style="left:1167px;top:176px;width:21px;height:58px;background:#ebebeb;border:1px solid #bdbdbd;border-left:none;"></div>
<div style="left:1167px;top:234px;width:21px;height:78px;background:#ebebeb;border:1px solid #bdbdbd;border-left:none;"></div>
<div style="left:1167px;top:312px;width:21px;height:70px;background:#ebebeb;border:1px solid #bdbdbd;border-left:none;"></div>
<div style="left:1167px;top:382px;width:21px;height:63px;background:#ebebeb;border:1px solid #bdbdbd;border-left:none;"></div>
<div style="left:1166px;top:445px;width:25px;height:106px;background:#fff;border:1px solid #b0b0b0;border-left:none;"></div>
<div style="left:1166px;top:551px;width:1px;height:207px;background:#a8a8a8;"></div>
<div style="left:1185px;top:184px;font-size:12px;line-height:14px;color:#333;white-space:pre;transform-origin:0 0;transform:rotate(90deg) scaleX(1.0073);">General</div>
<div style="left:1185px;top:243px;font-size:12px;line-height:14px;color:#333;white-space:pre;transform-origin:0 0;transform:rotate(90deg) scaleX(0.9722);">Documents</div>
<div style="left:1185px;top:320px;font-size:12px;line-height:14px;color:#333;white-space:pre;transform-origin:0 0;transform:rotate(90deg) scaleX(1.0459);">Attributes</div>
<div style="left:1185px;top:391px;font-size:12px;line-height:14px;color:#333;white-space:pre;transform-origin:0 0;transform:rotate(90deg) scaleX(0.9639);">Logistics</div>
<div style="left:1185px;top:474px;font-size:12px;line-height:14px;color:#333;white-space:pre;transform-origin:0 0;transform:rotate(90deg) scaleX(0.9300);">Relationships</div>
<svg style="left:1172px;top:455px" width="14" height="15" viewBox="0 0 14 15"><rect x="5.5" y="1" width="7" height="6" rx="2.5" fill="none" stroke="#6a6a6a" stroke-width="1.4"/><rect x="1.5" y="7" width="7" height="6" rx="2.5" fill="none" stroke="#6a6a6a" stroke-width="1.4"/></svg>
<svg style="left:849px;top:186px" width="15" height="13" viewBox="0 0 15 13"><rect x="1" y="1" width="8" height="5" rx="2.5" fill="none" stroke="#777" stroke-width="1.4"/><rect x="6" y="6.5" width="8" height="5" rx="2.5" fill="none" stroke="#777" stroke-width="1.4"/></svg>
<div style="left:867px;top:188.34px;font-size:12px;line-height:12px;color:#1e1e1e;transform:scaleX(0.9766);transform-origin:0 0;white-space:pre;">Link</div>
<svg style="left:894px;top:191px" width="7" height="4"><path d="M0 0H7L3.5 4Z" fill="#333"/></svg>
<svg style="left:908px;top:185px" width="15" height="15" viewBox="0 0 15 15"><circle cx="7.5" cy="7.5" r="7" fill="#bbb"/><circle cx="7.5" cy="7.5" r="5.6" fill="#d9242e"/><rect x="4" y="6.3" width="7" height="2.4" fill="#fff"/></svg>
<div style="left:927.4px;top:188.34px;font-size:12px;line-height:12px;color:#1e1e1e;transform:scaleX(0.9859);transform-origin:0 0;white-space:pre;">Delete</div>
<svg style="left:968px;top:191px" width="7" height="4"><path d="M0 0H7L3.5 4Z" fill="#333"/></svg>
<div style="left:844px;top:205px;width:320px;height:134px;background:#fff;border:1px solid #ababab;box-shadow:inset 1px 1px 0 #e6e6e6;"></div>
<div style="left:855.7px;top:210.84px;font-size:12px;line-height:12px;color:#1e1e1e;transform:scaleX(0.9780);transform-origin:0 0;white-space:pre;">Manufacturer Parts</div>
<div style="left:845px;top:226px;width:318px;height:1px;background:#b0b0b0;"></div>
<div style="left:845px;top:250px;width:318px;height:1px;background:#dcdcdc;"></div>
<div style="left:924px;top:227px;width:1px;height:23px;background:#d9d9d9;"></div>
<div style="left:1003px;top:227px;width:1px;height:23px;background:#d9d9d9;"></div>
<div style="left:1082px;top:227px;width:1px;height:23px;background:#d9d9d9;"></div>
<div style="left:850.5px;top:233.84px;font-size:12px;line-height:12px;color:#1e1e1e;white-space:pre;">Manufactur...</div>
<div style="left:930px;top:233.84px;font-size:12px;line-height:12px;color:#1e1e1e;white-space:pre;">Part Number</div>
<div style="left:1009px;top:233.84px;font-size:12px;line-height:12px;color:#1e1e1e;white-space:pre;">Description</div>
<div style="left:1088px;top:233.84px;font-size:12px;line-height:12px;color:#1e1e1e;transform:scaleX(0.9851);transform-origin:0 0;white-space:pre;">Part Marking</div>
<div style="left:845px;top:250px;width:318px;height:21px;background:#dedede;"></div>
<div style="left:924px;top:250px;width:1px;height:21px;background:#d9d9d9;"></div>
<div style="left:1003px;top:250px;width:1px;height:21px;background:#d9d9d9;"></div>
<div style="left:1082px;top:250px;width:1px;height:21px;background:#d9d9d9;"></div>
<div style="left:845px;top:271px;width:318px;height:1px;background:#dcdcdc;"></div>
<div style="left:850.5px;top:255.84px;font-size:12px;line-height:12px;color:#1e1e1e;white-space:pre;">TI</div>
<div style="left:930px;top:255.84px;font-size:12px;line-height:12px;color:#1e1e1e;transform:scaleX(0.9402);transform-origin:0 0;white-space:pre;">TPA2005D1...</div>
<div style="left:844px;top:343px;width:320px;height:134px;background:#fff;border:1px solid #ababab;box-shadow:inset 1px 1px 0 #e6e6e6;"></div>
<div style="left:855.7px;top:348.84px;font-size:12px;line-height:12px;color:#1e1e1e;transform:scaleX(0.9780);transform-origin:0 0;white-space:pre;">Vendor Parts</div>
<div style="left:845px;top:364px;width:318px;height:1px;background:#b0b0b0;"></div>
<div style="left:845px;top:388px;width:318px;height:1px;background:#dcdcdc;"></div>
<div style="left:924px;top:365px;width:1px;height:23px;background:#d9d9d9;"></div>
<div style="left:1003px;top:365px;width:1px;height:23px;background:#d9d9d9;"></div>
<div style="left:1082px;top:365px;width:1px;height:23px;background:#d9d9d9;"></div>
<div style="left:850.5px;top:371.84px;font-size:12px;line-height:12px;color:#1e1e1e;white-space:pre;">Vendor</div>
<div style="left:930px;top:371.84px;font-size:12px;line-height:12px;color:#1e1e1e;white-space:pre;">Part Number</div>
<div style="left:1009px;top:371.84px;font-size:12px;line-height:12px;color:#1e1e1e;white-space:pre;">Description</div>
<div style="left:1088px;top:371.84px;font-size:12px;line-height:12px;color:#1e1e1e;transform:scaleX(0.9851);transform-origin:0 0;white-space:pre;">Part Marking</div>
<div style="left:924px;top:388px;width:1px;height:21px;background:#d9d9d9;"></div>
<div style="left:1003px;top:388px;width:1px;height:21px;background:#d9d9d9;"></div>
<div style="left:1082px;top:388px;width:1px;height:21px;background:#d9d9d9;"></div>
<div style="left:845px;top:409px;width:318px;height:1px;background:#dcdcdc;"></div>
<div style="left:850.5px;top:393.84px;font-size:12px;line-height:12px;color:#1e1e1e;white-space:pre;">Vendor 1</div>
<div style="left:930px;top:393.84px;font-size:12px;line-height:12px;color:#1e1e1e;white-space:pre;">066238</div>
<div style="left:844px;top:481px;width:320px;height:135px;background:#fff;border:1px solid #ababab;box-shadow:inset 1px 1px 0 #e6e6e6;"></div>
<div style="left:855.7px;top:486.84px;font-size:12px;line-height:12px;color:#1e1e1e;transform:scaleX(0.9780);transform-origin:0 0;white-space:pre;">Customer Parts</div>
<div style="left:845px;top:502px;width:318px;height:1px;background:#b0b0b0;"></div>
<div style="left:845px;top:526px;width:318px;height:1px;background:#dcdcdc;"></div>
<div style="left:950px;top:503px;width:1px;height:23px;background:#d9d9d9;"></div>
<div style="left:1056px;top:503px;width:1px;height:23px;background:#d9d9d9;"></div>
<div style="left:850.5px;top:509.84px;font-size:12px;line-height:12px;color:#1e1e1e;white-space:pre;">Customer</div>
<div style="left:956px;top:509.84px;font-size:12px;line-height:12px;color:#1e1e1e;white-space:pre;">Part Number</div>
<div style="left:1062px;top:509.84px;font-size:12px;line-height:12px;color:#1e1e1e;white-space:pre;">Description</div>
<div style="left:844px;top:620px;width:320px;height:134px;background:#fff;border:1px solid #ababab;box-shadow:inset 1px 1px 0 #e6e6e6;"></div>
<div style="left:855.7px;top:625.84px;font-size:12px;line-height:12px;color:#1e1e1e;transform:scaleX(0.9780);transform-origin:0 0;white-space:pre;">Alternate Internal Parts</div>
<div style="left:845px;top:641px;width:318px;height:1px;background:#b0b0b0;"></div>
<div style="left:845px;top:690px;width:318px;height:1px;background:#dcdcdc;"></div>
<div style="left:927px;top:667px;width:1px;height:23px;background:#d9d9d9;"></div>
<div style="left:997px;top:667px;width:1px;height:23px;background:#d9d9d9;"></div>
<div style="left:1079px;top:667px;width:1px;height:23px;background:#d9d9d9;"></div>
<div style="left:850.5px;top:673.84px;font-size:12px;line-height:12px;color:#1e1e1e;white-space:pre;">Part Number</div>
<div style="left:933px;top:673.84px;font-size:12px;line-height:12px;color:#1e1e1e;white-space:pre;">Revision</div>
<div style="left:1003px;top:673.84px;font-size:12px;line-height:12px;color:#1e1e1e;white-space:pre;">Description</div>
<div style="left:1085px;top:673.84px;font-size:12px;line-height:12px;color:#1e1e1e;transform:scaleX(0.9536);transform-origin:0 0;white-space:pre;">Preceden...</div>
<div style="left:850px;top:645px;width:18px;height:18px;background:#ececec;border:1px solid #cfcfcf;"></div>
<div style="left:872px;top:645px;width:18px;height:18px;background:#ececec;border:1px solid #cfcfcf;"></div>
<svg style="left:852px;top:647px" width="14" height="14" viewBox="0 0 14 14"><circle cx="7" cy="7" r="6" fill="#cfd8cf" stroke="#b8b8b8"/><circle cx="7" cy="7" r="4.3" fill="#8fd08f"/><path d="M7 4.2L4.6 6.8H6.2V9.6H7.8V6.8H9.4Z" fill="#fff"/></svg>
<svg style="left:874px;top:647px" width="14" height="14" viewBox="0 0 14 14"><circle cx="7" cy="7" r="6" fill="#cfd8cf" stroke="#b8b8b8"/><circle cx="7" cy="7" r="4.3" fill="#8fd08f"/><path d="M7 9.8L4.6 7.2H6.2V4.4H7.8V7.2H9.4Z" fill="#fff"/></svg>
<svg style="left:1148px;top:675px" width="9" height="6"><path d="M0 5.5H9L4.5 0Z" fill="#555"/></svg>
<svg style="left:990px;top:341px" width="26" height="2"><rect x="0" y="0" width="2" height="1" fill="#999"/><rect x="3" y="0" width="2" height="1" fill="#999"/><rect x="6" y="0" width="2" height="1" fill="#999"/><rect x="9" y="0" width="2" height="1" fill="#999"/><rect x="12" y="0" width="2" height="1" fill="#999"/><rect x="15" y="0" width="2" height="1" fill="#999"/><rect x="18" y="0" width="2" height="1" fill="#999"/><rect x="21" y="0" width="2" height="1" fill="#999"/></svg>
<svg style="left:990px;top:479px" width="26" height="2"><rect x="0" y="0" width="2" height="1" fill="#999"/><rect x="3" y="0" width="2" height="1" fill="#999"/><rect x="6" y="0" width="2" height="1" fill="#999"/><rect x="9" y="0" width="2" height="1" fill="#999"/><rect x="12" y="0" width="2" height="1" fill="#999"/><rect x="15" y="0" width="2" height="1" fill="#999"/><rect x="18" y="0" width="2" height="1" fill="#999"/><rect x="21" y="0" width="2" height="1" fill="#999"/></svg>
<svg style="left:990px;top:618px" width="26" height="2"><rect x="0" y="0" width="2" height="1" fill="#999"/><rect x="3" y="0" width="2" height="1" fill="#999"/><rect x="6" y="0" width="2" height="1" fill="#999"/><rect x="9" y="0" width="2" height="1" fill="#999"/><rect x="12" y="0" width="2" height="1" fill="#999"/><rect x="15" y="0" width="2" height="1" fill="#999"/><rect x="18" y="0" width="2" height="1" fill="#999"/><rect x="21" y="0" width="2" height="1" fill="#999"/></svg>
<svg style="left:838px;top:480px" width="2" height="16"><rect x="0" y="0" width="2" height="1" fill="#999"/><rect x="0" y="2" width="2" height="1" fill="#999"/><rect x="0" y="4" width="2" height="1" fill="#999"/><rect x="0" y="6" width="2" height="1" fill="#999"/><rect x="0" y="8" width="2" height="1" fill="#999"/><rect x="0" y="10" width="2" height="1" fill="#999"/><rect x="0" y="12" width="2" height="1" fill="#999"/><rect x="0" y="14" width="2" height="1" fill="#999"/></svg>
<svg style="left:21.0px;top:88.7px" width="31.0" height="31.0" viewBox="-15.5 -15.5 31.0 31.0"><defs><linearGradient id="gnew" x1="0" y1="0" x2="0.3" y2="1"><stop offset="0" stop-color="#9ee09e"/><stop offset="0.45" stop-color="#3fae3f"/><stop offset="1" stop-color="#58c858"/></linearGradient></defs><circle r="13.8" fill="#fff" stroke="#4a4a4a" stroke-width="1.6"/><circle r="11.4" fill="none" stroke="#4a4a4a" stroke-width="0.9" opacity="0.55"/><circle r="10.6" fill="url(#gnew)"/><path d="M-8 0H8M0 -8V8" stroke="#fff" stroke-width="3" stroke-linecap="round"/><path d="M-7 0H7M0 -7V7" stroke="#777" stroke-width="0.6"/></svg>
<svg style="left:65.9px;top:88.7px" width="31.0" height="31.0" viewBox="-15.5 -15.5 31.0 31.0"><defs><linearGradient id="grev" x1="0" y1="0" x2="0.3" y2="1"><stop offset="0" stop-color="#e2f3e2"/><stop offset="0.5" stop-color="#bfe3bf"/><stop offset="1" stop-color="#cdeccd"/></linearGradient></defs><circle r="13.8" fill="#fff" stroke="#cfcfcf" stroke-width="1.6"/><circle r="11.4" fill="none" stroke="#cfcfcf" stroke-width="0.9" opacity="0.55"/><circle r="10.6" fill="url(#grev)"/><path d="M0 -7.5 L-5.8 -0.8 H-2.5 V7.2 H2.5 V-0.8 H5.8Z" fill="#fbfbfb"/></svg>
<svg style="left:116px;top:89px" width="23" height="32" viewBox="0 0 23 32"><path d="M6 1.5 L21 3 V28.5 L6 27Z" fill="#f1f5f9" stroke="#b9cbdb" stroke-width="1.2"/><path d="M1.5 3.5 L16 5 V30.5 L1.5 29Z" fill="#eef3f8" stroke="#b4c6d6" stroke-width="1.2"/><path d="M3 28 L15 16 V29Z" fill="#e3eaf1"/></svg>
<svg style="left:164px;top:88px" width="36" height="33" viewBox="0 0 36 33"><rect x="2" y="2.5" width="14" height="11" rx="1.5" fill="#b9bcc2" stroke="#9a9ea6" stroke-width="0.8"/><rect x="5.5" y="5.5" width="7" height="5" fill="#e9e3c8" stroke="#d8c47a" stroke-width="0.8"/><circle cx="4.0" cy="1.6" r="1" fill="#e8d27a"/><circle cx="4.0" cy="14.4" r="1" fill="#e8d27a"/><circle cx="7.3" cy="1.6" r="1" fill="#e8d27a"/><circle cx="7.3" cy="14.4" r="1" fill="#e8d27a"/><circle cx="10.6" cy="1.6" r="1" fill="#e8d27a"/><circle cx="10.6" cy="14.4" r="1" fill="#e8d27a"/><circle cx="13.9" cy="1.6" r="1" fill="#e8d27a"/><circle cx="13.9" cy="14.4" r="1" fill="#e8d27a"/><path d="M23.5 13 L24.5 20.5 L17.5 19.5 L19.5 17.5 L17 15 L19 13 L21.5 15.5Z" fill="#a9b6e6"/><rect x="26" y="18" width="7" height="13" rx="2" fill="#dfe7ea"/><rect x="27.5" y="17" width="4" height="2.6" fill="#b7d2dc"/></svg>
<svg style="left:247px;top:91px" width="28" height="28" viewBox="0 0 28 28"><defs><radialGradient id="ma0" cx="0.8" cy="0.8" r="0.9"><stop offset="0" stop-color="#ffa488"/><stop offset="0.65" stop-color="#f2582f"/><stop offset="1" stop-color="#de4420"/></radialGradient><radialGradient id="ma1" cx="0.2" cy="0.8" r="0.9"><stop offset="0" stop-color="#ffa488"/><stop offset="0.65" stop-color="#f2582f"/><stop offset="1" stop-color="#de4420"/></radialGradient><radialGradient id="ma2" cx="0.8" cy="0.2" r="0.9"><stop offset="0" stop-color="#ffa488"/><stop offset="0.65" stop-color="#f2582f"/><stop offset="1" stop-color="#de4420"/></radialGradient><radialGradient id="ma3" cx="0.2" cy="0.2" r="0.9"><stop offset="0" stop-color="#ffa488"/><stop offset="0.65" stop-color="#f2582f"/><stop offset="1" stop-color="#de4420"/></radialGradient></defs><rect x="0.3" y="0.3" width="27.4" height="27.4" fill="#a3230b"/><rect x="1.6" y="1.6" width="11.6" height="11.6" fill="url(#ma0)"/><rect x="14.8" y="1.6" width="11.6" height="11.6" fill="url(#ma1)"/><rect x="1.6" y="14.8" width="11.6" height="11.6" fill="url(#ma2)"/><rect x="14.8" y="14.8" width="11.6" height="11.6" fill="url(#ma3)"/></svg>
<svg style="left:320px;top:91px" width="28" height="28" viewBox="0 0 28 28"><defs><linearGradient id="mb" x1="0" y1="0" x2="1" y2="1"><stop offset="0" stop-color="#e6f2fb"/><stop offset="0.5" stop-color="#c6d4ef"/><stop offset="1" stop-color="#9eaad8"/></linearGradient></defs><rect x="0.5" y="0.5" width="27" height="27" fill="url(#mb)" stroke="#d6d2e6"/><rect x="0.5" y="14" width="13.5" height="13.5" fill="#fcd8cc" stroke="#ebbcad"/></svg>
<svg style="left:367.0px;top:88.7px" width="31.0" height="31.0" viewBox="-15.5 -15.5 31.0 31.0"><defs><linearGradient id="gdel" x1="0" y1="0" x2="0.3" y2="1"><stop offset="0" stop-color="#e88a92"/><stop offset="0.45" stop-color="#d0202c"/><stop offset="1" stop-color="#e8102a"/></linearGradient></defs><circle r="13.8" fill="#fff" stroke="#4a4a4a" stroke-width="1.6"/><circle r="11.600000000000001" fill="none" stroke="#4a4a4a" stroke-width="0.9" opacity="0.55"/><circle r="10.8" fill="url(#gdel)"/><rect x="-7.5" y="-3" width="15" height="6" rx="1" fill="#fff"/><rect x="-6.3" y="-2" width="12.6" height="4" fill="url(#dg)"/><defs><linearGradient id="dg"><stop offset="0" stop-color="#fff"/><stop offset="1" stop-color="#bdbdbd"/></linearGradient></defs></svg>
<svg style="left:416.2px;top:90.2px" width="24.4" height="24.4" viewBox="-12.2 -12.2 24.4 24.4"><defs><linearGradient id="gro" x1="0" y1="0" x2="0.3" y2="1"><stop offset="0" stop-color="#9ee09e"/><stop offset="0.45" stop-color="#3fae3f"/><stop offset="1" stop-color="#58c858"/></linearGradient></defs><circle r="10.5" fill="#fff" stroke="#4a4a4a" stroke-width="1.6"/><circle r="8.4" fill="none" stroke="#4a4a4a" stroke-width="0.9" opacity="0.55"/><circle r="7.6" fill="url(#gro)"/><path d="M0 -6 L-4.6 -0.6 H-2 V5.6 H2 V-0.6 H4.6Z" fill="#fff"/></svg>
<svg style="left:431.3px;top:105.0px" width="15.6" height="15.6" viewBox="-7.8 -7.8 15.6 15.6"><defs><linearGradient id="gro2" x1="0" y1="0" x2="0.3" y2="1"><stop offset="0" stop-color="#55c055"/><stop offset="1" stop-color="#1e8e1e"/></linearGradient></defs><circle r="6.1" fill="#fff" stroke="#4a4a4a" stroke-width="1.6"/><circle r="5.6" fill="none" stroke="#4a4a4a" stroke-width="0.9" opacity="0.55"/><circle r="4.8" fill="url(#gro2)"/><path d="M-3 -0.5 A3 3 0 0 1 2.5 -1.5 M3 0.5 A3 3 0 0 1 -2.5 1.5" fill="none" stroke="#fff" stroke-width="1.3"/></svg>
<svg style="left:34px;top:145px" width="6" height="3"><path d="M0 0H6L3 3Z" fill="#333"/></svg>
<svg style="left:192px;top:145px" width="6" height="4"><path d="M0 0H6L3 3.5Z" fill="#b0b0b0"/></svg>
<svg style="left:721px;top:91px" width="32" height="29" viewBox="0 0 32 29"><path d="M13 6 L21 4 L25 9 L17 13Z" fill="#2e3438"/><g transform="translate(18.6 21.6) rotate(-36)"><rect x="0" y="-4.6" width="13" height="9.2" rx="2" fill="#3b4248"/><rect x="2" y="-3.8" width="9" height="2.2" fill="#8c979e" opacity="0.8"/><rect x="9.5" y="-3.6" width="5" height="7.2" rx="1.5" fill="#2a2f33"/><ellipse cx="0.6" cy="0" rx="2.6" ry="4.7" fill="#1e2326"/><ellipse cx="0.6" cy="0" rx="1.7" ry="3.4" fill="#4cc0dc"/><ellipse cx="0.2" cy="-1" rx="0.7" ry="1.4" fill="#b8f0ff"/></g><g transform="translate(5.6 14) rotate(-36)"><rect x="0" y="-4.6" width="13" height="9.2" rx="2" fill="#3b4248"/><rect x="2" y="-3.8" width="9" height="2.2" fill="#8c979e" opacity="0.8"/><rect x="9.5" y="-3.6" width="5" height="7.2" rx="1.5" fill="#2a2f33"/><ellipse cx="0.6" cy="0" rx="2.6" ry="4.7" fill="#1e2326"/><ellipse cx="0.6" cy="0" rx="1.7" ry="3.4" fill="#4cc0dc"/><ellipse cx="0.2" cy="-1" rx="0.7" ry="1.4" fill="#b8f0ff"/></g></svg>
<svg style="left:764px;top:112px" width="9" height="15" viewBox="0 0 9 15"><rect x="0.5" y="1.5" width="8" height="13" rx="2.5" fill="#9db6c4"/><rect x="0.5" y="1.5" width="3" height="13" rx="1.5" fill="#7d97a6"/><rect x="2" y="0" width="5" height="3" rx="1" fill="#3f7f9e"/><rect x="2.5" y="6" width="3.5" height="5" fill="#eef3f5"/></svg>
<svg style="left:820px;top:111px" width="14" height="17" viewBox="0 0 14 17"><path d="M1 3 L8 1 L13 3 V15 L8 16.5 L1 15Z" fill="#e7edf0" stroke="#a9b8c0" stroke-width="0.6"/><path d="M8 1 V16.5 L13 15 V3Z" fill="#c5d3da"/><path d="M9 5 L12 4 M9 8 L12 7 M9 11 L12 10" stroke="#2a78d0" stroke-width="1.6"/></svg>
<svg style="left:872px;top:111px" width="14" height="17" viewBox="0 0 14 17"><rect x="0.5" y="2.5" width="8" height="12" rx="2.5" fill="#b5c1c7"/><rect x="2" y="1" width="5" height="3" rx="1" fill="#8fa1aa"/><circle cx="9.5" cy="12.5" r="3.6" fill="#cfd8dc" stroke="#8fa1aa" stroke-width="1"/></svg>
<svg style="left:760px;top:133px" width="16" height="17" viewBox="0 0 16 17"><path d="M1 15 L2 8 L5 7 L5 3 L7 3 L7 7 L9 6 V2 L10.5 2 V6 L14 7 L15 15Z" fill="#c7c9cc"/><path d="M3 10H13M3 12.5H13" stroke="#8d9196" stroke-width="0.8"/><path d="M0 15 L16 15 L15 17 L1 17Z" fill="#c84848"/><path d="M6 3 L6 0.5" stroke="#e0b050" stroke-width="1.5"/></svg>
<svg style="left:821px;top:133px" width="14" height="17" viewBox="0 0 14 17"><circle cx="6" cy="5" r="3.6" fill="#f0c8a8"/><path d="M2.4 4 Q3 0.6 6 0.8 Q9.4 0.8 9.6 4 Q8 2.5 6 2.6 Q4 2.5 2.4 4Z" fill="#222"/><path d="M0.5 17 Q0.5 9.5 6 9.5 Q11 9.5 11 17Z" fill="#1f2f66"/><path d="M5 9.5 L6 13 L7 9.5Z" fill="#fff"/><rect x="9.5" y="10" width="4" height="7" rx="1.2" fill="#b8c6cc"/></svg>
<svg style="left:870px;top:136px" width="14" height="14" viewBox="0 0 14 14"><rect width="7" height="7" fill="#2a5fe0"/><rect x="7" width="7" height="7" fill="#f2462a"/><rect y="7" width="7" height="7" fill="#f2462a"/><rect x="7" y="7" width="7" height="7" fill="#0b1f8c"/></svg>
</body></html>
